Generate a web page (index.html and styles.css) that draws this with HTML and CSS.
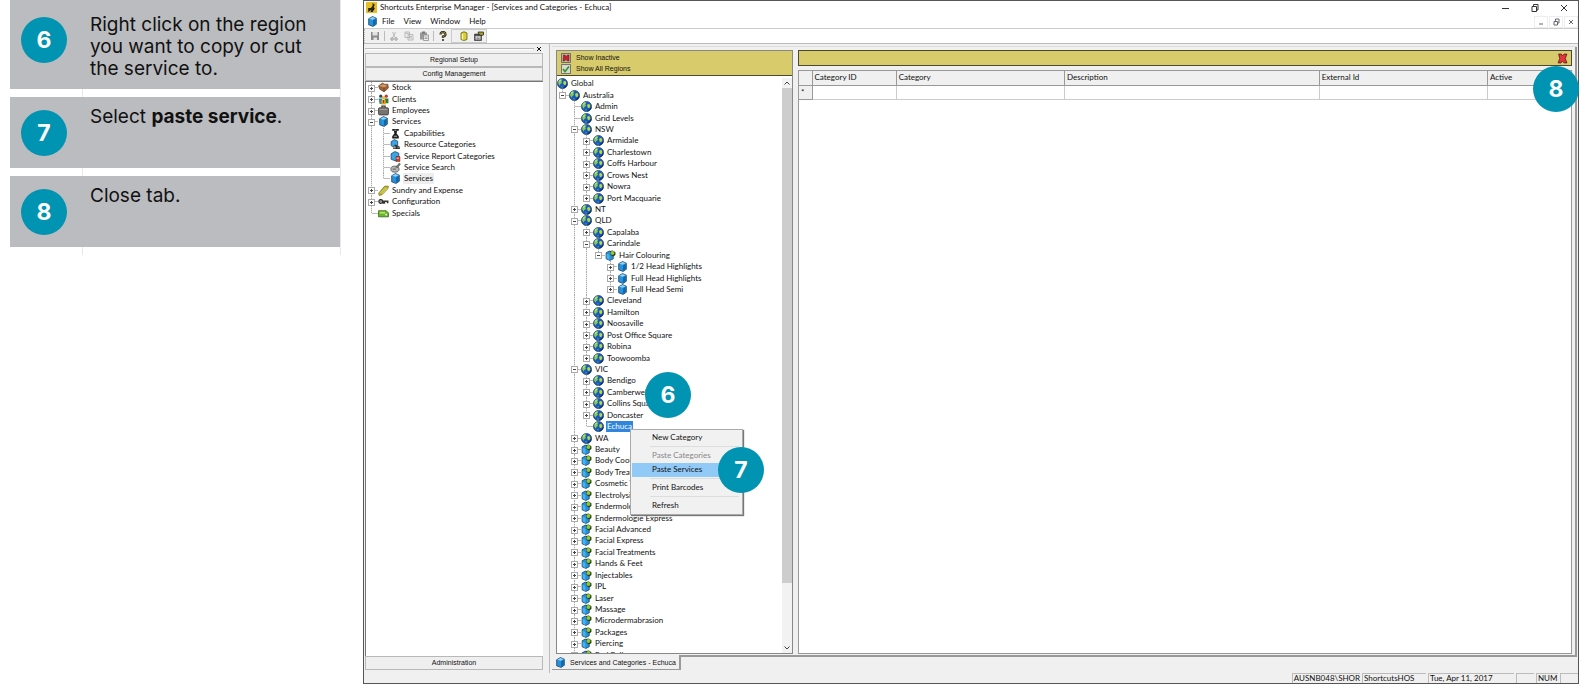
FILE: index.html
```html
<!DOCTYPE html>
<html lang="en">
<head>
<meta charset="utf-8">
<title>Shortcuts Enterprise Manager</title>
<link rel="stylesheet" href="styles.css">
</head>
<body>
<svg class="defs" aria-hidden="true">
  <symbol id="globe" viewBox="0 0 20 20"><circle cx="10" cy="10" r="9.300" fill="#1b56c4" stroke="#1c355f" stroke-width="1.200"/><path d="M10 19A9 9 0 0 0 19 10Q15 16 10 19Z" fill="#0c2c78"/><path d="M2 10Q2 4 7 2L10 3 8 6 9 9 6 11 5 14Z" fill="#7fce54"/><path d="M3 7Q4 4 7 3L6 6Z" fill="#d4f0d0"/><path d="M11 7 15 5 17 9 15 13 12 12Z" fill="#b5dc35"/><path d="M7 14 11 15 10 18 7 17Z" fill="#2f8f7c"/></symbol>
  <symbol id="cube" viewBox="0 0 20 20"><path d="M3 5 10 1 17 4V15L11 19 3 16Z" fill="#2492dc" stroke="#1b4163" stroke-width="1.400"/><path d="M4 5 10 2 16 4 10 7Z" fill="#8fd2f7"/><path d="M11 8 16 5V14L11 18Z" fill="#1466a8"/></symbol>
  <symbol id="cat" viewBox="0 0 20 20"><path d="M2 5 8 2 15 5V16L9 19 2 16Z" fill="#2492dc" stroke="#1b4163" stroke-width="1.400"/><path d="M3 7 8 9V18L3 15Z" fill="#49b4f2"/><path d="M9 2 14 1 19 4V9L15 12 10 9Z" fill="#24401a"/><circle cx="13.500" cy="5.500" r="3.600" fill="#8fc63c"/></symbol>
  <symbol id="box" viewBox="0 0 20 20"><path d="M1 7 8 2 12 4 18 4 19 11 11 18 3 13Z" fill="#9a6237" stroke="#50331d"/><path d="M2 7 9 4 17 7 11 10Z" fill="#d19a62"/><path d="M11 10V17" stroke="#50331d"/></symbol>
  <symbol id="people" viewBox="0 0 20 20"><circle cx="5" cy="4" r="3" fill="#39495a"/><circle cx="15" cy="4" r="3" fill="#b3402a"/><path d="M1 8H8V18H3Z" fill="#2e8e9c"/><path d="M12 8H19V17H13Z" fill="#2f7c3b"/><circle cx="10" cy="7" r="3" fill="#efb434"/><path d="M6 11H14V19H6Z" fill="#e0a21d"/><path d="M9 11H11V16H9Z" fill="#b12d24"/></symbol>
  <symbol id="case" viewBox="0 0 20 20"><path d="M7 5V2H13V5" fill="none" stroke="#333" stroke-width="2"/><rect x="1" y="5" width="18" height="13" rx="2" fill="#77736f" stroke="#3b3937" stroke-width="1.500"/><path d="M3 8H17" stroke="#a5a19c" stroke-width="2"/></symbol>
  <symbol id="cap" viewBox="0 0 20 20"><path d="M4 2H16V5H13L12 10 16 15V19H4V15L8 10 7 5H4Z" fill="#1d1d1d"/><path d="M8 4H12M7 15H13" stroke="#ccc" stroke-width="1.500"/></symbol>
  <symbol id="res" viewBox="0 0 20 20"><path d="M2 5 8 1 14 4V12L8 15 2 12Z" fill="#3aa5e6" stroke="#1b4163" stroke-width="1.400"/><path d="M5 14 10 10 18 14V18H6Z" fill="#333"/><circle cx="8" cy="15" r="2.500" fill="#8a8f94"/><path d="M13 15H19" stroke="#bbb"/></symbol>
  <symbol id="report" viewBox="0 0 20 20"><path d="M2 5 9 1 16 4V15L10 18 2 15Z" fill="#3aa5e6" stroke="#1b4163" stroke-width="1.400"/><path d="M11 10H18V19H11Z" fill="#c8412f" stroke="#6d1d15"/><path d="M12 12H16V14H12Z" fill="#f0d0c8"/></symbol>
  <symbol id="search" viewBox="0 0 20 20"><ellipse cx="9" cy="13" rx="7.500" ry="5.500" fill="#b8b8b8" stroke="#555" stroke-width="1.500"/><path d="M10 10 17 2 19 4 13 11" fill="#777" stroke="#444"/><path d="M5 13H11" stroke="#666" stroke-width="2"/></symbol>
  <symbol id="clip" viewBox="0 0 20 20"><path d="M1 15 12 2 19 2 18 7 7 18 2 19Z" fill="#b4ad2b" stroke="#6b661a"/><path d="M4 15 15 4M7 16 17 6" stroke="#eee77b" stroke-width="1.500"/></symbol>
  <symbol id="key" viewBox="0 0 20 20"><circle cx="5" cy="10" r="3.500" fill="#999" stroke="#222" stroke-width="2"/><path d="M8 8H19V13H16V11H13V14H8Z" fill="#333"/></symbol>
  <symbol id="tag" viewBox="0 0 20 20"><path d="M1 5H15L19 9V16H1Z" fill="#6ab92b" stroke="#2f5f17" stroke-width="1.400"/><path d="M3 7H13V10H3Z" fill="#b9e85c"/><circle cx="15" cy="12" r="1.700" fill="#fff"/></symbol>
  <symbol id="cross" viewBox="0 0 20 20"><path d="M3 2H8L10 5 13 2H18L15 10 18 18H13L10 15 7 18H2L5 10Z" fill="#e2353c" stroke="#5b1717" stroke-width="1.500"/></symbol>
</svg>

<main class="page">
  <ol class="guide">
    <li class="step"><span class="badge">6</span><p>Right click on the region you want to copy or cut the service to.</p></li>
    <li class="step"><span class="badge">7</span><p>Select <b>paste service</b>.</p></li>
    <li class="step"><span class="badge">8</span><p>Close tab.</p></li>
    <li class="step-end"></li>
  </ol>

  <section class="window">
    <header class="title">
      <svg class="ic" viewBox="0 0 20 20"><path d="M0 0H20V20H0Z" fill="#e7bd25"/><path d="M4 18V11L9 11 12 7V2L16 5 14 9 16 12 12 18H8L10 14Z" fill="#222"/></svg>
      <h1>Shortcuts Enterprise Manager - [Services and Categories - Echuca]</h1>
      <div class="win-buttons">
        <button aria-label="Minimize"><svg viewBox="0 0 8 8"><path d="M0 4.500H7"/></svg></button>
        <button aria-label="Restore"><svg viewBox="0 0 8 8"><path d="M1 2.500H5.500V7.500H1ZM2.500 2.500V.5H7V6H5.500"/></svg></button>
        <button aria-label="Close"><svg viewBox="0 0 8 8"><path d="M1 1 7 7M7 1 1 7"/></svg></button>
      </div>
    </header>
    <nav class="menubar">
      <svg class="ic"><use href="#cube"/></svg>
      <button>File</button><button>View</button><button>Window</button><button>Help</button>
      <div class="mdi-buttons">
        <button aria-label="Minimize tab"><svg viewBox="0 0 8 8"><path d="M2 6H6"/></svg></button>
        <button aria-label="Restore tab"><svg viewBox="0 0 8 8"><path d="M2 3.500H5.500V7H2ZM3.500 3V1H7V5H6"/></svg></button>
        <button aria-label="Close tab"><svg viewBox="0 0 8 8"><path d="M2 2 6 6M6 2 2 6"/></svg></button>
      </div>
    </nav>
    <div class="toolbar">
      <div class="tools">
        <button aria-label="Save"><svg viewBox="0 0 20 20"><path d="M2 2H18V18H2Z" fill="#8b8b8b"/><path d="M5 2H15V9H5ZM7 13H14V18H7Z" fill="#e3e3e3"/></svg></button>
        <i></i>
        <button aria-label="Cut"><svg viewBox="0 0 20 20"><path d="M7 2 13 14M13 2 7 14" stroke="#aaa" stroke-width="1.500"/><circle cx="6" cy="16" r="2.500" fill="none" stroke="#999" stroke-width="2"/><circle cx="14" cy="16" r="2.500" fill="none" stroke="#999" stroke-width="2"/></svg></button>
        <button aria-label="Copy"><svg viewBox="0 0 20 20"><path d="M2 2H11V13H2ZM8 7H18V18H8Z" fill="#eee" stroke="#aaa" stroke-width="1.500"/><path d="M10 11H16M10 14H16M4 5H9" stroke="#aaa" stroke-width="1.500"/></svg></button>
        <button aria-label="Paste"><svg viewBox="0 0 20 20"><path d="M2 3H16V17H2Z" fill="#999"/><path d="M6 1H12V5H6Z" fill="#777"/><path d="M9 8H19V19H9Z" fill="#eee" stroke="#888" stroke-width="1.500"/><path d="M11 12H17M11 15H17" stroke="#888" stroke-width="1.500"/></svg></button>
        <i></i>
        <button aria-label="Help"><svg viewBox="0 0 20 20"><path d="M5 7Q5 2 10 2T15 7Q15 10 10 11V14" fill="none" stroke="#222" stroke-width="4.500"/><path d="M5 7Q5 2 10 2T15 7Q15 10 10 11V14" fill="none" stroke="#b5a71e" stroke-width="1.500"/><circle cx="10" cy="18" r="2" fill="#222"/></svg></button>
      </div>
      <div class="tools raised">
        <button aria-label="Database"><svg viewBox="0 0 20 20"><path d="M4 4Q10-1 16 4V17Q10 21 4 17Z" fill="#d8cf37" stroke="#5d5815" stroke-width="1.500"/><path d="M7 6V17" stroke="#faf6a6" stroke-width="2.500"/></svg></button>
        <button aria-label="Properties"><svg viewBox="0 0 20 20"><path d="M1 6H15V19H1Z" fill="#555" stroke="#111"/><path d="M3 10H13V17H3Z" fill="#ddd"/><path d="M5 12H11M5 15H11" stroke="#333"/><path d="M8 2H19V8L14 9 10 7Z" fill="#a99c2b" stroke="#222" stroke-width="1.500"/></svg></button>
      </div>
    </div>

    <div class="work">
      <aside class="dock">
        <div class="dock-grip"><span></span><button aria-label="Close panel"><svg viewBox="0 0 8 8"><path d="M2 2 6 6M6 2 2 6"/></svg></button></div>
        <button class="bar">Regional Setup</button>
        <button class="bar">Config Management</button>
        <div class="tree-box"><ul class="tree" id="config-tree"></ul></div>
        <button class="bar">Administration</button>
      </aside>

      <div class="mdi">
        <div class="mdi-body">
          <section class="regions">
            <div class="filters">
              <button><svg viewBox="0 0 20 20"><path d="M1 1H19V19H1Z" fill="#b9b9a9" stroke="#555" stroke-width="1.500"/><path d="M5 4H8L10 7 13 4H16V16H13L10 13 7 16H4Z" fill="#cf2027" stroke="#5b1717"/></svg>Show Inactive</button>
              <button><svg viewBox="0 0 20 20"><path d="M1 1H19V19H1Z" fill="#d9d9cd" stroke="#555" stroke-width="1.500"/><path d="M4 10 8 15 16 5" fill="none" stroke="#3b9440" stroke-width="3.500"/></svg>Show All Regions</button>
            </div>
            <div class="region-body">
              <div class="tree-box"><ul class="tree" id="region-tree"></ul></div>
              <div class="scroll"><svg viewBox="0 0 8 8"><path d="M1.500 5.500 4 3 6.500 5.500"/></svg><span class="thumb"></span><span class="track"></span><svg viewBox="0 0 8 8"><path d="M1.500 2.500 4 5 6.500 2.500"/></svg></div>
            </div>
            <span class="badge on-region">6</span>
          </section>

          <section class="records">
            <div class="strip"><button aria-label="Close"><svg><use href="#cross"/></svg></button></div>
            <div class="grid">
              <table>
                <colgroup><col class="c-mark"><col class="c-id"><col class="c-mid"><col class="c-desc"><col class="c-mid"><col></colgroup>
                <thead><tr><th></th><th>Category ID</th><th>Category</th><th>Description</th><th>External Id</th><th>Active</th></tr></thead>
                <tbody><tr><th>*</th><td></td><td></td><td></td><td></td><td></td></tr></tbody>
              </table>
            </div>
          </section>
        </div>
        <div class="tabs"><button class="tab"><svg class="ic"><use href="#cube"/></svg>Services and Categories - Echuca</button><span></span></div>
      </div>
    </div>

    <footer class="status"><span class="s-user">AUSNB048\SHOR</span><span class="s-db">ShortcutsHOS</span><span class="s-date">Tue, Apr 11, 2017</span><span class="s-gap"></span><span class="s-num">NUM</span><span class="s-gap"></span></footer>
    <span class="badge on-close">8</span>
  </section>
</main>

<template id="context-menu">
  <div class="context" role="menu">
    <button role="menuitem">New Category</button>
    <hr>
    <button role="menuitem" disabled>Paste Categories</button>
    <button role="menuitem" class="hot">Paste Services</button>
    <hr>
    <button role="menuitem">Print Barcodes</button>
    <hr>
    <button role="menuitem">Refresh</button>
    <span class="badge on-menu">7</span>
  </div>
</template>
<script src="tree.js"></script>
</body>
</html>
```
FILE: styles.css
```css
* { box-sizing: border-box; }
body { margin: 0; background: #fff; color: #111; font-family: "Lato", "Open Sans", sans-serif; font-size: 8px; line-height: 11px; }
button { font: inherit; color: inherit; background: none; border: 0; padding: 0; margin: 0; }
svg { display: block; flex: none; }
.defs { position: absolute; width: 0; height: 0; }
.ic { width: 11px; height: 11px; }
.page { display: flex; height: 100vh; padding: 0 7px 11px 10px; gap: 22px; }

.badge { display: flex; align-items: center; justify-content: center; flex: none; width: 46px; height: 46px; border-radius: 50%; background: #0093b2; color: #fff; font: 700 23px/24px "Inter", sans-serif; }

.guide { list-style: none; margin: -8px 0 0; padding: 0; flex: 0 0 331px; align-self: flex-start; display: flex; flex-direction: column; gap: 8px; border-right: 1px solid #e8e8e8; background: linear-gradient(#e8e8e8, #e8e8e8) 72px 0 / 1px 100% no-repeat; }
.step { display: flex; align-items: center; gap: 23px; min-height: 71px; padding: 9px 20px 9px 11px; background: #bbbcc0; color: #111; }
.step:first-child { padding-top: 22px; min-height: 95px; }
.step:first-child .badge { margin-top: -14px; }
.step p { margin: 0; align-self: flex-start; font: 19px/22px "Inter", sans-serif; }
.step-end { height: 0; }

.window { position: relative; flex: 1; min-width: 0; display: flex; flex-direction: column; border: 1px solid #555; background: #fff; }
.title { display: flex; align-items: center; height: 13px; padding-left: 2px; gap: 3px; }
.title h1 { margin: 0; font-size: 8px; font-weight: 400; flex: 1; }
.win-buttons { display: flex; gap: 21px; padding-right: 10px; }
.win-buttons svg, .mdi-buttons svg, .dock-grip svg { width: 8px; height: 8px; fill: none; stroke: #333; stroke-width: 1; }
.menubar { display: flex; align-items: center; height: 15px; padding: 1px 0 0 3px; gap: 9px; border-bottom: 1px solid #ccc; }
.menubar .ic { margin-right: -5px; }
.mdi-buttons { margin-left: auto; display: flex; gap: 1px; }
.mdi-buttons button { padding: 1px 2px; border: 1px solid #eee; }
.mdi-buttons svg { stroke: #667; }
.toolbar { display: flex; height: 14px; }
.tools { display: flex; align-items: center; gap: 5px; padding: 0 3px 0 5px; background: #f0f0f0; border-left: 1px dotted #bbb; }
.tools i { width: 1px; height: 10px; margin: 0 -1px; background: #bbb; }
.tools svg { width: 10px; height: 10px; }
.raised { border: 1px solid #ccc; padding: 0 2px 0 7px; }

.work { flex: 1; min-height: 0; display: flex; background: #f0f0f0; border-top: 1px solid #bbb; }
.dock { width: 186px; display: flex; flex-direction: column; padding: 0 6px 3px 1px; border-right: 1px solid #bbb; }
.dock-grip { display: flex; align-items: center; height: 9px; gap: 1px; }
.dock-grip span { flex: 1; height: 2px; border: 1px solid #bbb; border-bottom-color: #fff; }
.dock-grip svg { stroke: #111; }
.bar { height: 14px; border: 1px solid #b8b8b8; background: #efefef; font: 7px/12px "Liberation Sans", sans-serif; }
.tree-box { flex: 1; min-height: 0; min-width: 0; overflow: hidden; background: #fff; }
.dock .tree-box { border: 1px solid #777; border-width: 1px 0 0 1px; }
.tree { list-style: none; margin: 0; padding: 0; height: calc(100% + 8px); display: grid; grid-template-rows: repeat(51, minmax(0, 1fr)); }
.tree li { position: relative; display: flex; align-items: center; white-space: nowrap; }
.tree .ic { margin-right: 2px; }
.tree .label { padding: 0 1px; }
.rail { width: 12px; flex: none; align-self: stretch; }
.rail.line, .joint { background: repeating-linear-gradient(#aaa 0 1px, #e4e4e4 1px 2px) 5px 0 / 1px 100% no-repeat; }
.joint { position: relative; width: 12px; flex: none; align-self: stretch; display: flex; align-items: center; }
.joint.end { background-size: 1px 50%; }
.joint::after { content: ""; margin-left: 6px; width: 6px; height: 1px; background: #bbb; }
.joint button { position: absolute; left: 2px; top: 50%; margin-top: -3px; width: 7px; height: 7px; border: 1px solid #aaa; background: linear-gradient(#444, #444) 1px 2px / 3px 1px no-repeat #fff; }
.joint button.plus { background: linear-gradient(#444, #444) 1px 2px / 3px 1px no-repeat, linear-gradient(#444, #444) 2px 1px / 1px 3px no-repeat #fff; }
.label.soft { background: #eee; }
.label.chosen { background: #2f86dc; color: #fff; }

.mdi { flex: 1; min-width: 0; margin: 2px 1px 3px 2px; display: flex; flex-direction: column; border-top: 1px solid #ddd; }
.mdi-body { flex: 1; min-height: 0; display: flex; gap: 5px; padding: 3px 3px 1px 4px; border-right: 2px solid #999; }
.regions { position: relative; width: 237px; display: flex; flex-direction: column; border: 1px solid #888; }
.filters { background: #d7cb6c; border-bottom: 1px solid #4c4832; padding: 1px 3px 1px 4px; font: 7px/11px "Liberation Sans", sans-serif; }
.filters button { display: flex; align-items: center; gap: 5px; height: 11px; }
.filters svg { width: 10px; height: 10px; }
.region-body { flex: 1; min-height: 0; display: flex; padding-top: 2px; background: #fff; }
.scroll { width: 10px; display: flex; flex-direction: column; align-items: center; background: #f2f2f2; }
.scroll svg { width: 8px; height: 10px; fill: none; stroke: #444; }
.scroll .thumb { flex: 495; width: 100%; background: #cdcdcd; }
.scroll .track { flex: 60; }
.records { flex: 1; min-width: 0; display: flex; flex-direction: column; gap: 4px; }
.strip { height: 16px; display: flex; align-items: center; justify-content: flex-end; padding-right: 3px; background: #d7cb6c; border: 1px solid #4c4832; }
.strip svg { width: 11px; height: 11px; }
.grid { flex: 1; background: #fff; border: 1px solid #999; }
table { width: 100%; table-layout: fixed; border-collapse: collapse; }
th, td { height: 14px; padding: 0 2px; text-align: left; font-weight: 400; border-right: 1px solid #ccc; border-bottom: 1px solid #ccc; }
th { background: #f0f0f0; border-color: #999; }
th:last-child, td:last-child { border-right: 0; }
.c-mark { width: 13px; }
.c-id { width: 10.9%; }
.c-mid { width: 21.8%; }
.c-desc { width: 33%; }
.tabs { display: flex; height: 15px; }
.tabs span { flex: 1; border-top: 2px solid #999; }
.tab { display: flex; align-items: center; gap: 4px; padding: 0 3px; border: 1px solid #999; border-width: 0 2px 1px 0; font: 7px/11px "Liberation Sans", sans-serif; }

.status { display: flex; justify-content: flex-end; gap: 2px; height: 10px; overflow: hidden; background: #f0f0f0; }
.status span { border: 1px solid #bbb; border-width: 1px 0 0 1px; padding-left: 1px; line-height: 9px; white-space: nowrap; }
.s-user { min-width: 60px; }
.s-db { width: 64px; }
.s-date { width: 86px; }
.s-gap { width: 18px; }
.s-num { width: 22px; }

.context { position: absolute; z-index: 2; left: 73px; top: 8px; width: 113px; padding: 1px; display: flex; flex-direction: column; background: #f1f1f1; border: 1px solid #aaa; box-shadow: 1px 1px 1px #777; }
.context button { height: 14px; padding-left: 20px; text-align: left; }
.context button:disabled { color: #888; }
.context .hot { background: #91c9f7; }
.context hr { width: calc(100% - 20px); margin: 1px 0 2px 18px; border: 0; border-top: 1px solid #ddd; }
.on-region, .on-menu, .on-close { position: absolute; }
.on-region { left: 88px; top: 321px; }
.on-menu { left: 87px; top: 17px; }
.on-close { right: -1px; top: 65px; }
```
FILE: tree.js
```js
// Each row: depth, expander ("+", "-" or ""), icon, label
const config = [
  [1, "+", "box", "Stock"], [1, "+", "people", "Clients"], [1, "+", "case", "Employees"], [1, "-", "cube", "Services"],
  [2, "", "cap", "Capabilities"], [2, "", "res", "Resource Categories"], [2, "", "report", "Service Report Categories"],
  [2, "", "search", "Service Search"], [2, "", "cube", "Services", "soft"],
  [1, "+", "clip", "Sundry and Expense"], [1, "+", "key", "Configuration"], [1, "", "tag", "Specials"]
];

const towns = names => names.map(n => [3, "+", "globe", n]);
const categories = ["Beauty", "Body Cool", "Body Treatments", "Cosmetic Tattoo", "Electrolysis", "Endermologie", "Endermologie Express",
  "Facial Advanced", "Facial Express", "Facial Treatments", "Hands & Feet", "Injectables", "IPL", "Laser", "Massage",
  "Microdermabrasion", "Packages", "Piercing", "Red Balloon"];

const regions = [
  [0, "", "globe", "Global"], [1, "-", "globe", "Australia"], [2, "", "globe", "Admin"], [2, "", "globe", "Grid Levels"],
  [2, "-", "globe", "NSW"], ...towns(["Armidale", "Charlestown", "Coffs Harbour", "Crows Nest", "Nowra", "Port Macquarie"]),
  [2, "+", "globe", "NT"], [2, "-", "globe", "QLD"], ...towns(["Capalaba"]), [3, "-", "globe", "Carindale"],
  [4, "-", "cat", "Hair Colouring"], [5, "+", "cube", "1/2 Head Highlights"], [5, "+", "cube", "Full Head Highlights"], [5, "+", "cube", "Full Head Semi"],
  ...towns(["Cleveland", "Hamilton", "Noosaville", "Post Office Square", "Robina", "Toowoomba"]),
  [2, "-", "globe", "VIC"], ...towns(["Bendigo", "Camberwell", "Collins Square", "Doncaster"]),
  [3, "", "globe", "Echuca", "chosen"], [2, "+", "globe", "WA"],
  ...categories.map(n => [2, "+", "cat", n])
];

// True when a later row sits at this depth before the branch closes
function continues(rows, index, depth) {
  for (let i = index + 1; i < rows.length; i++) {
    if (rows[i][0] === depth) return true;
    if (rows[i][0] < depth) return false;
  }
  return false;
}

function render(id, rows, openEnded) {
  const root = document.getElementById(id);
  rows.forEach(([depth, sign, icon, text, state], i) => {
    const more = d => (openEnded && d === 2) || continues(rows, i, d);
    const li = document.createElement("li");
    let html = "";
    for (let d = 1; d < depth; d++) html += `<span class="rail${more(d) ? " line" : ""}"></span>`;
    if (depth) {
      const kind = sign === "+" ? "plus" : "minus";
      const name = sign === "+" ? "Expand " : "Collapse ";
      html += `<span class="joint${more(depth) ? "" : " end"}">${sign ? `<button class="${kind}" aria-label="${name}${text}"></button>` : ""}</span>`;
    }
    html += `<svg class="ic" aria-hidden="true"><use href="#${icon}"/></svg><span class="label ${state || ""}">${text.replace("&", "&amp;")}</span>`;
    li.innerHTML = html;
    if (state === "chosen") li.append(document.getElementById("context-menu").content.cloneNode(true));
    root.append(li);
  });
}

render("config-tree", config, false);
render("region-tree", regions, true);
```
